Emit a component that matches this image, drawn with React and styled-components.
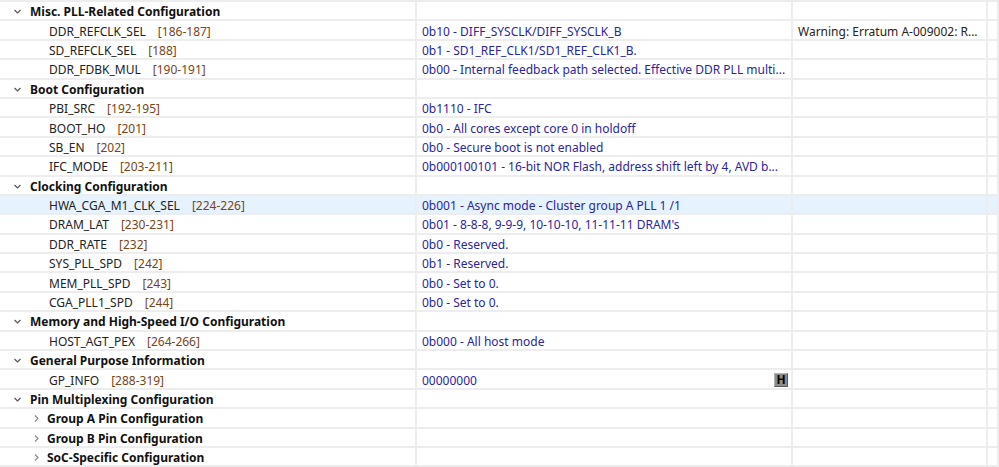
import React from "react";
import styled, { createGlobalStyle } from "styled-components";

const GlobalStyle = createGlobalStyle`
  html, body {
    margin: 0;
    padding: 0;
    background: #ffffff;
  }
  body {
    font-family: "Noto Sans", "Open Sans", sans-serif;
    font-size: 12px;
    overflow: hidden;
  }
`;

const rows = [
  { type: "group", label: "Misc. PLL-Related Configuration" },
  {
    name: "DDR_REFCLK_SEL",
    bits: "[186-187]",
    value: "0b10 - DIFF_SYSCLK/DIFF_SYSCLK_B",
    note: "Warning: Erratum A-009002: R...",
  },
  { name: "SD_REFCLK_SEL", bits: "[188]", value: "0b1 - SD1_REF_CLK1/SD1_REF_CLK1_B." },
  {
    name: "DDR_FDBK_MUL",
    bits: "[190-191]",
    value: "0b00 - Internal feedback path selected. Effective DDR PLL multi...",
  },
  { type: "group", label: "Boot Configuration" },
  { name: "PBI_SRC", bits: "[192-195]", value: "0b1110 - IFC" },
  { name: "BOOT_HO", bits: "[201]", value: "0b0 - All cores except core 0 in holdoff" },
  { name: "SB_EN", bits: "[202]", value: "0b0 - Secure boot is not enabled" },
  {
    name: "IFC_MODE",
    bits: "[203-211]",
    value: "0b000100101 - 16-bit NOR Flash, address shift left by 4, AVD b...",
  },
  { type: "group", label: "Clocking Configuration" },
  {
    name: "HWA_CGA_M1_CLK_SEL",
    bits: "[224-226]",
    value: "0b001 - Async mode - Cluster group A PLL 1 /1",
    selected: true,
  },
  { name: "DRAM_LAT", bits: "[230-231]", value: "0b01 - 8-8-8, 9-9-9, 10-10-10, 11-11-11 DRAM's" },
  { name: "DDR_RATE", bits: "[232]", value: "0b0 - Reserved." },
  { name: "SYS_PLL_SPD", bits: "[242]", value: "0b1 - Reserved." },
  { name: "MEM_PLL_SPD", bits: "[243]", value: "0b0 - Set to 0." },
  { name: "CGA_PLL1_SPD", bits: "[244]", value: "0b0 - Set to 0." },
  { type: "group", label: "Memory and High-Speed I/O Configuration" },
  { name: "HOST_AGT_PEX", bits: "[264-266]", value: "0b000 - All host mode" },
  { type: "group", label: "General Purpose Information" },
  { name: "GP_INFO", bits: "[288-319]", value: "00000000", hex: true },
  { type: "group", label: "Pin Multiplexing Configuration" },
  { type: "sub", label: "Group A Pin Configuration" },
  { type: "sub", label: "Group B Pin Configuration" },
  { type: "sub", label: "SoC-Specific Configuration" },
];

const Table = styled.div`
  border-top: 2px solid #ededed;
`;

const Row = styled.div`
  display: grid;
  grid-template-columns: 417px 376px 195px 1fr;
  height: 19.4px;
  background: ${(p) => (p.$selected ? "#e6f2fd" : "#ffffff")};
`;

const Cell = styled.div`
  display: flex;
  align-items: center;
  box-sizing: border-box;
  border-right: 2px solid #ededed;
  border-bottom: 2px solid #ededed;
  padding-top: 2px;
  padding-left: ${(p) => p.$pad || 4}px;
  white-space: nowrap;
  overflow: hidden;
  color: #1e1e1e;
  line-height: 15px;
`;

const Chevron = styled.svg`
  flex: none;
  width: 9px;
  height: 9px;
  margin-right: ${(p) => p.$gap}px;
`;

const GroupLabel = styled.span`
  font-weight: 700;
  color: #111;
`;

const Name = styled.span`
  color: #222;
`;

const Bits = styled.span`
  margin-left: 12px;
  color: #7a4416;
`;

const Value = styled.span`
  color: #2a25a0;
  flex: 1;
  min-width: 0;
`;

const Note = styled.span`
  color: #2b2218;
`;

const HexButton = styled.span`
  flex: none;
  width: 14px;
  height: 14px;
  margin-right: 3px;
  box-sizing: border-box;
  background: #8c8c8c;
  border: 1px solid #5a5a5a;
  border-top-color: #b4b4b4;
  border-left-color: #b4b4b4;
  display: flex;
  align-items: center;
  justify-content: center;
  font-weight: 700;
  font-size: 12px;
  line-height: 1;
  color: #000;
`;

const Down = () => (
  <Chevron viewBox="0 0 9 9" $gap={8}>
    <polyline points="1.5,3 4.5,6 7.5,3" fill="none" stroke="#555" strokeWidth="1.2" />
  </Chevron>
);

const Right = () => (
  <Chevron viewBox="0 0 9 9" $gap={6}>
    <polyline points="3,1.5 6,4.5 3,7.5" fill="none" stroke="#8a8a8a" strokeWidth="1.2" />
  </Chevron>
);

const TreeRow = ({ row }) => {
  if (row.type === "group") {
    return (
      <Row>
        <Cell $pad={13}>
          <Down />
          <GroupLabel>{row.label}</GroupLabel>
        </Cell>
        <Cell />
        <Cell />
        <Cell />
      </Row>
    );
  }
  if (row.type === "sub") {
    return (
      <Row>
        <Cell $pad={32}>
          <Right />
          <GroupLabel>{row.label}</GroupLabel>
        </Cell>
        <Cell />
        <Cell />
        <Cell />
      </Row>
    );
  }
  return (
    <Row $selected={row.selected}>
      <Cell $pad={49}>
        <Name>{row.name}</Name>
        <Bits>{row.bits}</Bits>
      </Cell>
      <Cell $pad={5}>
        <Value>{row.value}</Value>
        {row.hex && <HexButton>H</HexButton>}
      </Cell>
      <Cell $pad={5}>{row.note && <Note>{row.note}</Note>}</Cell>
      <Cell />
    </Row>
  );
};

export default function App() {
  return (
    <>
      <GlobalStyle />
      <Table>
        {rows.map((row, i) => (
          <TreeRow key={i} row={row} />
        ))}
      </Table>
    </>
  );
}
